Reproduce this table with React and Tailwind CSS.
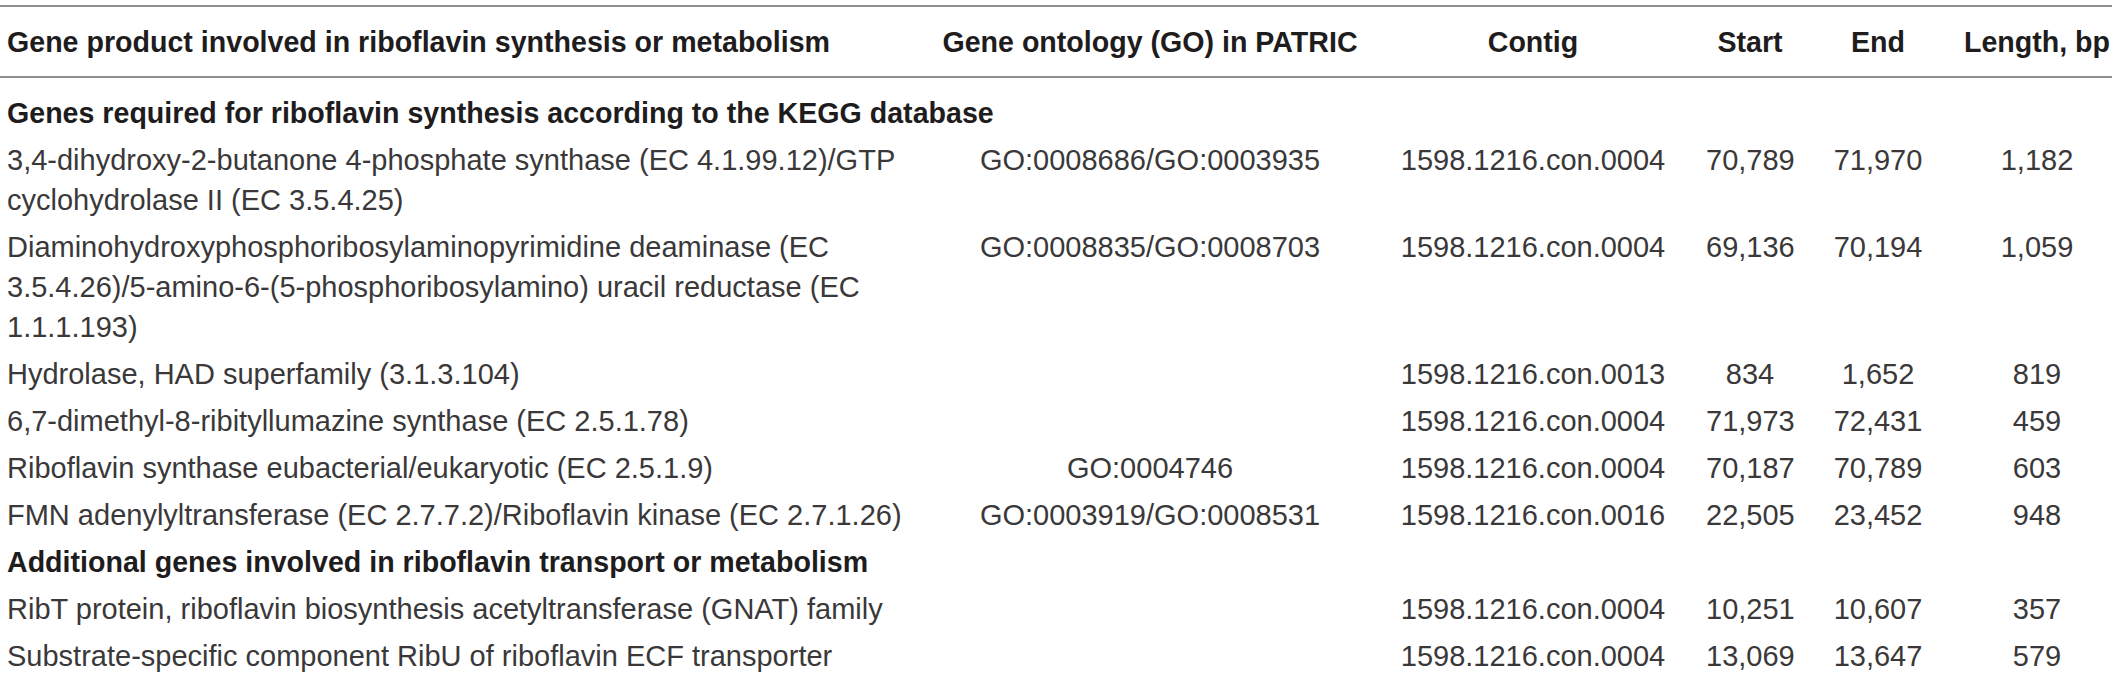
import React from "react";

const cols = "grid grid-cols-[940px_420px_346px_88px_168px_150px]";

const rows = [
  { section: "Genes required for riboflavin synthesis according to the KEGG database" },
  {
    name: ["3,4-dihydroxy-2-butanone 4-phosphate synthase (EC 4.1.99.12)/GTP", "cyclohydrolase II (EC 3.5.4.25)"],
    go: "GO:0008686/GO:0003935",
    contig: "1598.1216.con.0004",
    start: "70,789",
    end: "71,970",
    len: "1,182",
  },
  {
    name: [
      "Diaminohydroxyphosphoribosylaminopyrimidine deaminase (EC",
      "3.5.4.26)/5-amino-6-(5-phosphoribosylamino) uracil reductase (EC",
      "1.1.1.193)",
    ],
    go: "GO:0008835/GO:0008703",
    contig: "1598.1216.con.0004",
    start: "69,136",
    end: "70,194",
    len: "1,059",
  },
  {
    name: ["Hydrolase, HAD superfamily (3.1.3.104)"],
    go: "",
    contig: "1598.1216.con.0013",
    start: "834",
    end: "1,652",
    len: "819",
  },
  {
    name: ["6,7-dimethyl-8-ribityllumazine synthase (EC 2.5.1.78)"],
    go: "",
    contig: "1598.1216.con.0004",
    start: "71,973",
    end: "72,431",
    len: "459",
  },
  {
    name: ["Riboflavin synthase eubacterial/eukaryotic (EC 2.5.1.9)"],
    go: "GO:0004746",
    contig: "1598.1216.con.0004",
    start: "70,187",
    end: "70,789",
    len: "603",
  },
  {
    name: ["FMN adenylyltransferase (EC 2.7.7.2)/Riboflavin kinase (EC 2.7.1.26)"],
    go: "GO:0003919/GO:0008531",
    contig: "1598.1216.con.0016",
    start: "22,505",
    end: "23,452",
    len: "948",
  },
  { section: "Additional genes involved in riboflavin transport or metabolism" },
  {
    name: ["RibT protein, riboflavin biosynthesis acetyltransferase (GNAT) family"],
    go: "",
    contig: "1598.1216.con.0004",
    start: "10,251",
    end: "10,607",
    len: "357",
  },
  {
    name: ["Substrate-specific component RibU of riboflavin ECF transporter"],
    go: "",
    contig: "1598.1216.con.0004",
    start: "13,069",
    end: "13,647",
    len: "579",
  },
];

export default function App() {
  return (
    <div
      className="w-[2118px] h-[678px] overflow-hidden bg-white pt-[5px]"
      style={{ fontFamily: '"Liberation Sans", Arial, sans-serif' }}
    >
      <div className="w-[2112px]">
        <div
          className={`${cols} border-t-2 border-b-2 border-[#8f8f8f] pt-[15px] pb-[14px] text-[28.6px] leading-[40px] font-bold text-[#1e1c1d] whitespace-nowrap`}
        >
          <div className="pl-[7px]">Gene product involved in riboflavin synthesis or metabolism</div>
          <div className="text-center">Gene ontology (GO) in PATRIC</div>
          <div className="text-center">Contig</div>
          <div className="text-center">Start</div>
          <div className="text-center">End</div>
          <div className="text-center">Length, bp</div>
        </div>
        {rows.map((r, i) =>
          r.section ? (
            <div
              key={i}
              className={`pl-[7px] ${i === 0 ? "pt-[15px]" : "pt-[4px]"} pb-[3px] text-[28.6px] leading-[40px] font-bold text-[#1e1c1d] whitespace-nowrap`}
            >
              {r.section}
            </div>
          ) : (
            <div
              key={i}
              className={`${cols} pt-[4px] pb-[3px] text-[29px] leading-[40px] text-[#3a3839] whitespace-nowrap`}
            >
              <div className="pl-[7px]">
                {r.name.map((l, j) => (
                  <div key={j}>{l}</div>
                ))}
              </div>
              <div className="text-center">{r.go}</div>
              <div className="text-center">{r.contig}</div>
              <div className="text-center">{r.start}</div>
              <div className="text-center">{r.end}</div>
              <div className="text-center">{r.len}</div>
            </div>
          )
        )}
      </div>
    </div>
  );
}
